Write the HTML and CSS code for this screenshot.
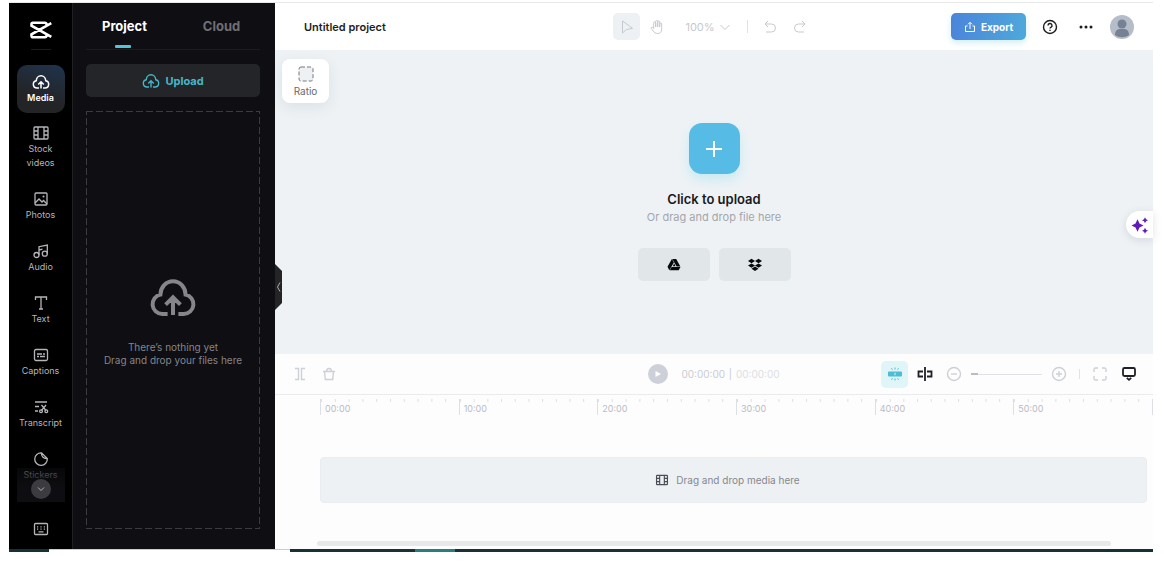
FILE: index.html
```html
<!DOCTYPE html>
<html lang="en">
<head>
<meta charset="utf-8">
<meta name="viewport" content="width=device-width, initial-scale=1">
<title>Untitled project</title>
<link rel="stylesheet" href="styles.css">
</head>
<body>
<svg class="defs" aria-hidden="true">
  <symbol id="cloud" viewBox="0 0 24 24"><path d="M9.300 20H6.600a4.900 4.900 0 0 1-.9-9.700C5.800 6.600 8.500 3.600 12 3.600s6.200 3 6.300 6.700a4.900 4.900 0 0 1-.9 9.700h-2.700M12 20.500v-8.500M8.300 15.300 12 11.700l3.700 3.600"/></symbol>
  <symbol id="film" viewBox="0 0 18 18"><rect x="2" y="3" width="14" height="12" rx="1"/><path d="M6 3v12M12 3v12M2 7h4M2 11h4M12 7h4M12 11h4"/></symbol>
</svg>
<div class="app">
  <nav class="rail" aria-label="Tools">
    <div class="logo">
      <svg width="22" height="18" viewBox="0 0 22 18"><path d="M16.500 4.500V3.300a1.500 1.500 0 0 0-1.500-1.500H3a1.500 1.500 0 0 0-1.500 1.500v1.400L21.300 15.800M16.500 13.500v1.200a1.500 1.500 0 0 1-1.500 1.500H3a1.500 1.500 0 0 1-1.500-1.500v-1.400L21.300 2.200" fill="none" stroke="#fff" stroke-width="2.600"/></svg>
    </div>
    <div class="tools">
      <button class="tool active"><svg class="ico"><use href="#cloud"/></svg><span>Media</span></button>
      <button class="tool stock"><svg class="ico"><use href="#film"/></svg><span>Stock videos</span></button>
      <button class="tool"><svg class="ico" viewBox="0 0 18 18"><rect x="3" y="3" width="12" height="12" rx="1"/><path d="m3 13 4-4 3 3 1.500-1.500L15 14"/><circle class="solid" cx="11.500" cy="6.500" r="1"/></svg><span>Photos</span></button>
      <button class="tool"><svg class="ico" viewBox="0 0 18 18"><circle cx="4.500" cy="13" r="2.500"/><circle cx="12.800" cy="11.700" r="2.500"/><path d="M7 13V4.700L15.300 3v8.700M7 8l3.500-.8"/></svg><span>Audio</span></button>
      <button class="tool"><svg class="ico" viewBox="0 0 18 18"><path d="M3.500 6V3h11v3M9 3v12M7 15h4"/></svg><span>Text</span></button>
      <button class="tool"><svg class="ico" viewBox="0 0 18 18"><rect x="2.500" y="3.500" width="13" height="11" rx="1.500"/><path d="M5 8h5M11 8h2M5 10.500h2M8 10.500h5"/></svg><span>Captions</span></button>
      <button class="tool"><svg class="ico" viewBox="0 0 18 18"><path d="M3 4h12M3 8.500h4M3 13h3M9.500 7l4.500 5.500M14 7l-4.500 5.500"/><circle cx="9" cy="13.200" r="1.400"/><circle cx="14.300" cy="13.200" r="1.400"/></svg><span>Transcript</span></button>
      <button class="tool"><svg class="ico" viewBox="0 0 18 18"><path d="M9.500 2.800A6.300 6.300 0 1 0 15.300 8.500ZM9.500 2.800c-.5 3.500 2 6 5.800 5.700"/></svg><span>Stickers</span></button>
      <div class="fade"><button class="more" aria-label="More tools"><svg width="10" height="10" viewBox="0 0 10 10"><path d="m2 3.500 3 3 3-3"/></svg></button></div>
    </div>
    <button class="keys" aria-label="Keyboard shortcuts"><svg class="ico" viewBox="0 0 18 18"><rect x="2.500" y="3.500" width="13" height="11" rx="1"/><path d="M5 6.800h1.200M8.400 6.800h1.200M11.800 6.800H13M5 9.200h1.200M8.400 9.200h1.200M11.800 9.200H13M6.500 11.800h5"/></svg></button>
  </nav>

  <aside class="panel">
    <div class="tabs" role="tablist">
      <button class="tab selected" role="tab" aria-selected="true">Project</button>
      <button class="tab" role="tab" aria-selected="false">Cloud</button>
    </div>
    <button class="upload"><svg class="ico"><use href="#cloud"/></svg>Upload</button>
    <div class="drop">
      <svg class="outline" aria-hidden="true"><rect x="0" y="0" width="100%" height="100%"/></svg>
      <svg class="big"><use href="#cloud"/></svg>
      <p>There’s nothing yet<br>Drag and drop your files here</p>
    </div>
    <button class="collapse" aria-label="Collapse panel"><svg width="5" height="12" viewBox="0 0 5 12"><path d="M4 1.500 1.500 6 4 10.500"/></svg></button>
  </aside>

  <main class="editor">
    <header class="top">
      <h1>Untitled project</h1>
      <div class="modes">
        <button class="mode on" aria-label="Select"><svg width="16" height="16" viewBox="0 0 16 16"><path d="M3.500 2v12l3.700-3.300 6.300-1.400Z"/></svg></button>
        <button class="mode" aria-label="Pan"><svg width="16" height="16" viewBox="0 0 16 16"><path d="M4.700 9.500V4a1 1 0 0 1 2 0V8 2.500a1 1 0 0 1 2 0V8 3a1 1 0 0 1 2 0v5V5a1 1 0 0 1 2 0v5c0 3-1.700 4.500-4 4.500-2.500 0-3.500-1-4.500-2.500L2.300 9.500c-.6-1 .6-1.800 1.300-1.100Z"/></svg></button>
        <button class="zoom">100%<svg width="12" height="12" viewBox="0 0 12 12"><path d="m1.500 4 4.500 4.500L10.500 4"/></svg></button>
        <i class="bar"></i>
        <button class="mode" aria-label="Undo"><svg width="16" height="16" viewBox="0 0 16 16"><path d="M6 2 3 5l3 3M3 5h6.500a4 4 0 0 1 0 8H4"/></svg></button>
        <button class="mode" aria-label="Redo"><svg width="16" height="16" viewBox="0 0 16 16"><path d="m10 2 3 3-3 3M13 5H6.500a4 4 0 0 0 0 8H12"/></svg></button>
      </div>
      <div class="account">
        <button class="export"><svg width="12" height="12" viewBox="0 0 12 12"><path d="M3.500 5H1.500v5.500h9V5h-2M6 8V1.500M4 3.300 6 1.300l2 2"/></svg>Export</button>
        <button class="small" aria-label="Help"><svg width="16" height="16" viewBox="0 0 16 16"><circle cx="8" cy="8" r="6.500"/><path d="M6 6.500a2 2 0 1 1 2.900 1.800c-.6.300-.9.600-.9 1.200M8 10.700V12"/></svg></button>
        <button class="small" aria-label="More"><svg class="dots" width="16" height="16" viewBox="0 0 16 16"><circle cx="3" cy="8" r="1.500"/><circle cx="8" cy="8" r="1.500"/><circle cx="13" cy="8" r="1.500"/></svg></button>
        <button class="avatar" aria-label="Account"><svg width="24" height="24" viewBox="0 0 24 24"><circle cx="12" cy="9" r="4.500"/><path d="M5 20c0-4 2-6 5-6h4c3 0 5 2 5 6-4 3-10 3-14 0Z"/></svg></button>
      </div>
    </header>

    <section class="canvas">
      <button class="ratio"><svg width="18" height="18" viewBox="0 0 18 18"><rect x="2" y="2" width="14" height="14" rx="2"/></svg>Ratio</button>
      <div class="start">
        <button class="plus" aria-label="Upload file"><svg width="18" height="18" viewBox="0 0 18 18"><path d="M9 1v16M1 9h16"/></svg></button>
        <h2>Click to upload</h2>
        <p>Or drag and drop file here</p>
        <div class="sources">
          <button aria-label="Google Drive"><svg width="14" height="14" viewBox="0 0 14 14"><path d="M4.900 1 .5 8.800 2.300 12.300 6.900 4.500ZM5.300 1h3.900l4.200 7.400H9.600ZM4.600 8.900h8.900L11.700 12.300H2.800ZM7.200 5.600 8.600 8.200H5.700Z"/></svg></button>
          <button aria-label="Dropbox"><svg width="16" height="14" viewBox="0 0 16 14"><path d="M4.500.8 8 3 4.500 5.200 1 3ZM11.500.8 15 3l-3.500 2.200L8 3ZM4.500 5.400 8 7.600 4.500 9.800 1 7.600ZM11.500 5.400 15 7.600l-3.500 2.200L8 7.600ZM8 8.600l3.500 2.200L8 13l-3.500-2.200Z"/></svg></button>
        </div>
      </div>
      <button class="magic" aria-label="Smart tools"><svg width="18" height="18" viewBox="0 0 18 18"><path d="M6.500 3.200 8.500 7.500 12.500 9.500 8.500 11.500 6.500 15.800 4.500 11.500.5 9.500 4.500 7.500ZM14 1.200l1 2 2 1-2 1-1 2-1-2-2-1 2-1ZM14 11.700l1 2 2 1-2 1-1 2-1-2-2-1 2-1Z"/></svg></button>
    </section>

    <section class="timeline">
      <div class="controls">
        <div class="group edit">
          <button class="small" aria-label="Split"><svg width="16" height="16" viewBox="0 0 16 16"><path d="M3 2.500h3.500v11H3M13 2.500H9.500v11H13"/></svg></button>
          <button class="small" aria-label="Delete"><svg width="16" height="16" viewBox="0 0 16 16"><path d="M2 5.500h12M3.500 5.500l.8 8h7.400l.8-8M5.500 5.500c0-4 5-4 5 0"/></svg></button>
        </div>
        <div class="group play-group">
          <button class="play" aria-label="Play"><svg width="8" height="8" viewBox="0 0 8 8"><path d="M1.500 1v6L7 4Z"/></svg></button>
          <span class="time">00:00:00 <i>|</i> <span>00:00:00</span></span>
        </div>
        <div class="group view">
          <button class="mode snap" aria-label="Snapping"><svg width="16" height="16" viewBox="0 0 16 16"><path class="solid" fill-rule="evenodd" d="M2 5.500h12a1 1 0 0 1 1 1v3a1 1 0 0 1-1 1H2a1 1 0 0 1-1-1v-3a1 1 0 0 1 1-1Zm5.500 1.200v2.600h1V6.700Z"/><path d="M8 1.500v2M4.500 2.200l.9 1.500M11.500 2.200l-.9 1.500M8 12.500v2M4.500 13.800l.9-1.500M11.500 13.800l-.9-1.500"/></svg></button>
          <button class="small dark" aria-label="Preview axis"><svg width="16" height="16" viewBox="0 0 16 16"><path d="M8 1v14M6 5.500H1.500v5H6M10 5.500h4.500v5H10"/></svg></button>
          <button class="small" aria-label="Zoom out"><svg width="16" height="16" viewBox="0 0 16 16"><circle cx="8" cy="8" r="6.500"/><path d="M5 8h6"/></svg></button>
          <input class="scale" type="range" min="0" max="100" value="0" aria-label="Timeline zoom">
          <button class="small" aria-label="Zoom in"><svg width="16" height="16" viewBox="0 0 16 16"><circle cx="8" cy="8" r="6.500"/><path d="M5 8h6M8 5v6"/></svg></button>
          <i class="bar short"></i>
          <button class="small" aria-label="Full screen"><svg width="16" height="16" viewBox="0 0 16 16"><path d="M2 6V3.500A1.500 1.500 0 0 1 3.500 2H6M10 2h2.500A1.500 1.500 0 0 1 14 3.500V6M14 10v2.500a1.500 1.500 0 0 1-1.500 1.500H10M6 14H3.500A1.500 1.500 0 0 1 2 12.500V10"/></svg></button>
          <button class="small dark" aria-label="Preview settings"><svg width="16" height="16" viewBox="0 0 16 16"><rect x="2" y="2" width="12" height="8" rx="1.500"/><path d="m5.800 11.800 2.200 2 2.200-2"/></svg></button>
        </div>
      </div>
      <div class="ruler">
        <span>00:00</span><span>10:00</span><span>20:00</span><span>30:00</span><span>40:00</span><span>50:00</span>
      </div>
      <div class="track"><svg class="film"><use href="#film"/></svg>Drag and drop media here</div>
      <div class="scroll"></div>
    </section>
  </main>
</div>
<footer class="strip"><i></i><i></i><i></i><i></i><i></i></footer>
</body>
</html>
```

FILE: styles.css
```css
* { box-sizing: border-box; }

body {
  display: flex;
  flex-direction: column;
  height: 100vh;
  margin: 0;
  padding: 2px 11px 10px 9px;
  background: #fff;
  font-family: Inter, "Noto Sans", sans-serif;
  font-size: 10px;
  line-height: 14px;
}

button {
  display: flex;
  align-items: center;
  justify-content: center;
  margin: 0;
  padding: 0;
  border: 0;
  background: none;
  color: inherit;
  font: inherit;
  cursor: pointer;
}

h1, h2, p { margin: 0; }

svg {
  flex: none;
  fill: none;
  stroke: currentColor;
}

.defs { position: absolute; width: 0; height: 0; }
.solid { fill: currentColor; stroke: none; }

.app {
  display: grid;
  grid-template-columns: 64px 202px 1fr;
  flex: 1;
  min-height: 0;
  border-top: 1px solid #e9e9ea;
}

/* Tool rail */
.rail {
  display: flex;
  flex-direction: column;
  align-items: center;
  min-height: 0;
  border-right: 1px solid #202022;
  background: #000;
  color: #b4b5b9;
}

.logo {
  display: flex;
  align-items: center;
  justify-content: center;
  width: 20px;
  height: 47px;
  padding-top: 7px;
  border-bottom: 1px solid #1c1c1e;
}

.tools {
  position: relative;
  display: flex;
  flex: 1;
  flex-direction: column;
  gap: 4px;
  width: 48px;
  min-height: 0;
  margin-top: 15px;
  overflow: hidden;
  font-size: 9px;
}

.tool {
  flex: none;
  flex-direction: column;
  padding: 8px 0;
  border-radius: 10px;
}

.tool.stock { margin-top: -1px; }
.tool.stock span { padding: 0 6px; }

.tool.active {
  background: linear-gradient(20deg, #232426 35%, #1f344e);
  color: #fff;
  font-weight: 600;
}

.ico { width: 18px; height: 18px; stroke-width: 1.3; }
.active .ico { stroke-width: 2; }

.fade {
  position: absolute;
  right: 0;
  bottom: 0;
  left: 0;
  display: flex;
  align-items: flex-end;
  justify-content: center;
  height: 34px;
  padding-bottom: 3px;
  background: linear-gradient(rgba(14, 14, 18, .5), #0e0e12 60%);
}

.more {
  width: 20px;
  height: 20px;
  border-radius: 50%;
  background: #3b3b40;
}

.keys { width: 48px; height: 24px; margin: 15px 0 8px; }

/* Media panel */
.panel {
  position: relative;
  display: flex;
  flex-direction: column;
  padding: 0 15px 20px 13px;
  background: #0e0e13;
}

.tabs {
  display: grid;
  grid-template-columns: 77px 77px;
  justify-content: space-between;
  height: 47px;
  border-bottom: 1px solid #1c1c20;
}

.tab {
  position: relative;
  color: #6f6f74;
  font-size: 13px;
  font-weight: 700;
}

.tab.selected { color: #fff; }

.tab.selected::after {
  position: absolute;
  bottom: 1px;
  left: 50%;
  width: 16px;
  height: 3px;
  margin-left: -10px;
  border-radius: 1px;
  background: #55c3d9;
  content: "";
}

.upload {
  gap: 5px;
  height: 33px;
  margin: 14px 0;
  border-radius: 5px;
  background: #242529;
  color: #45b8c8;
  font-size: 11px;
  font-weight: 700;
}

.upload .ico { stroke-width: 1.8; }

.drop {
  position: relative;
  display: flex;
  flex: 1;
  flex-direction: column;
  align-items: center;
  justify-content: center;
  gap: 19px;
  color: #85858a;
  line-height: 13px;
  text-align: center;
}

.outline {
  position: absolute;
  width: 100%;
  height: 100%;
  stroke: #3b3b40;
  stroke-dasharray: 7 3;
  stroke-width: 2;
}

.big { width: 54px; height: 48px; stroke-width: 2; }

.collapse {
  position: absolute;
  top: 261px;
  right: -7px;
  z-index: 1;
  width: 7px;
  height: 46px;
  background: #242426;
  color: #aaa;
  clip-path: polygon(0 0, 100% 15%, 100% 85%, 0 100%);
}

/* Editor header */
.editor {
  display: flex;
  flex-direction: column;
  min-width: 0;
  min-height: 0;
}

.top {
  display: grid;
  grid-template-columns: 1fr auto 1fr;
  align-items: center;
  height: 47px;
  padding: 0 19px 0 18px;
  background: #fff;
}

h1 {
  padding-left: 11px;
  color: #1d1e22;
  font-size: 11px;
  font-weight: 600;
}

.modes {
  display: flex;
  align-items: center;
  gap: 3px;
  color: #c6c9d0;
}

.mode { width: 27px; height: 27px; border-radius: 5px; }
.mode.on { background: #edf1f4; }
.zoom { gap: 4px; padding: 0 7px 0 12px; font-size: 11px; }

.bar { width: 1px; height: 13px; margin: 0 6px; background: #e0e2e6; }
.bar.short { height: 10px; margin: 0 3px; }

.account {
  display: flex;
  align-items: center;
  justify-content: flex-end;
  gap: 12px;
  color: #1c1c20;
}

.export {
  gap: 5px;
  width: 75px;
  height: 27px;
  border-radius: 5px;
  background: linear-gradient(100deg, #4b84da, #4ea9da);
  box-shadow: 0 3px 6px #d3eef4;
  color: #fff;
  font-weight: 700;
}

.small { width: 24px; height: 24px; }
.small svg { stroke-width: 1.4; }
.dark svg { stroke-width: 1.8; }
.small .dots { fill: currentColor; stroke: none; }

.avatar {
  width: 24px;
  height: 24px;
  overflow: hidden;
  border-radius: 50%;
  background: #b5bdc8;
  color: #768294;
}

.avatar svg { fill: currentColor; stroke: none; }

/* Canvas */
.canvas {
  position: relative;
  display: flex;
  flex: 1;
  align-items: center;
  justify-content: center;
  background: #eef2f5;
}

.ratio {
  position: absolute;
  top: 9px;
  left: 7px;
  flex-direction: column;
  gap: 1px;
  width: 47px;
  height: 44px;
  border-radius: 8px;
  background: #fff;
  box-shadow: 0 4px 14px rgba(60, 80, 100, .1);
  color: #68696f;
}

.ratio rect {
  fill: #edf1f4;
  stroke: #777980;
  stroke-dasharray: 4 2;
}

.start {
  display: flex;
  flex-direction: column;
  align-items: center;
}

.plus {
  width: 51px;
  height: 51px;
  border-radius: 13px;
  background: #57bce5;
  box-shadow: 0 6px 12px #c8eaf2;
  color: #fff;
}

.plus svg { stroke-width: 2; }

h2 {
  margin-top: 16px;
  color: #18191d;
  font-size: 13px;
  font-weight: 600;
  line-height: 18px;
}

.start p { color: #a3a6ab; font-size: 11px; line-height: 18px; }

.sources { display: flex; gap: 9px; margin-top: 22px; }

.sources button {
  width: 72px;
  height: 33px;
  border-radius: 5px;
  background: #e1e7e9;
  color: #08090b;
}

.sources svg, .magic svg, .play svg { fill: currentColor; stroke: none; }

.magic {
  position: absolute;
  top: 161px;
  right: 0;
  width: 27px;
  height: 27px;
  border-radius: 14px 0 0 14px;
  background: #fff;
  box-shadow: 0 2px 8px rgba(60, 70, 90, .15);
  color: #611bb8;
}

/* Timeline */
.timeline { background: #fdfdfe; }

.controls {
  display: grid;
  grid-template-columns: 1fr auto 1fr;
  align-items: center;
  height: 41px;
  padding: 0 12px;
  border-bottom: 1px solid #e9ebee;
  color: #cdd0d6;
}

.group { display: flex; align-items: center; gap: 5px; }
.edit { padding-left: 1px; }
.view { justify-content: flex-end; }
.play-group { gap: 13px; }

.play {
  width: 20px;
  height: 20px;
  border-radius: 50%;
  background: #cdd0d8;
  color: #fff;
}

.time { color: #c9ccd2; }
.time span { color: #dcdee2; }
.time i { margin: 0 1px; font-style: normal; }

.snap { background: #e0f5f8; color: #4cbdd3; }
.dark { color: #202126; }

.scale {
  width: 71px;
  height: 16px;
  margin: 0;
  appearance: none;
  background: linear-gradient(#e0e2e5, #e0e2e5) center / 100% 1px no-repeat;
}

.scale::-webkit-slider-thumb {
  width: 7px;
  height: 2px;
  appearance: none;
  background: #b9bcc2;
}

.ruler {
  display: grid;
  grid-template-columns: repeat(6, 1fr);
  margin: 4px 0 0 45px;
  border-right: 1px solid #dddfe3;
  color: #b9bcc3;
  font-size: 9px;
}

.ruler span {
  padding: 3px 0 0 4px;
  border-left: 1px solid #dddfe3;
  background: linear-gradient(90deg, #dddfe3 1px, transparent 1px) 0 0 / 10% 3px repeat-x;
  line-height: 13px;
}

.track {
  display: flex;
  align-items: center;
  justify-content: center;
  gap: 7px;
  height: 46px;
  margin: 42px 6px 38px 45px;
  padding-right: 12px;
  border: 1px solid #e9edf0;
  border-radius: 4px;
  background: #eef1f4;
  color: #85878d;
}

.film { width: 14px; height: 14px; color: #4c4d57; stroke-width: 1.5; }

.scroll {
  height: 5px;
  margin: 0 42px 3px;
  border-radius: 3px;
  background: #e6e8ea;
}

.strip {
  display: grid;
  grid-template-columns: 40px 241px 125px 40px 1fr;
  height: 3px;
  background: #173237;
}

.strip i:nth-child(2) { background: #fff; border-top: 1px solid #ccc; }
.strip i:nth-child(4) { background: #287d7d; }
```
